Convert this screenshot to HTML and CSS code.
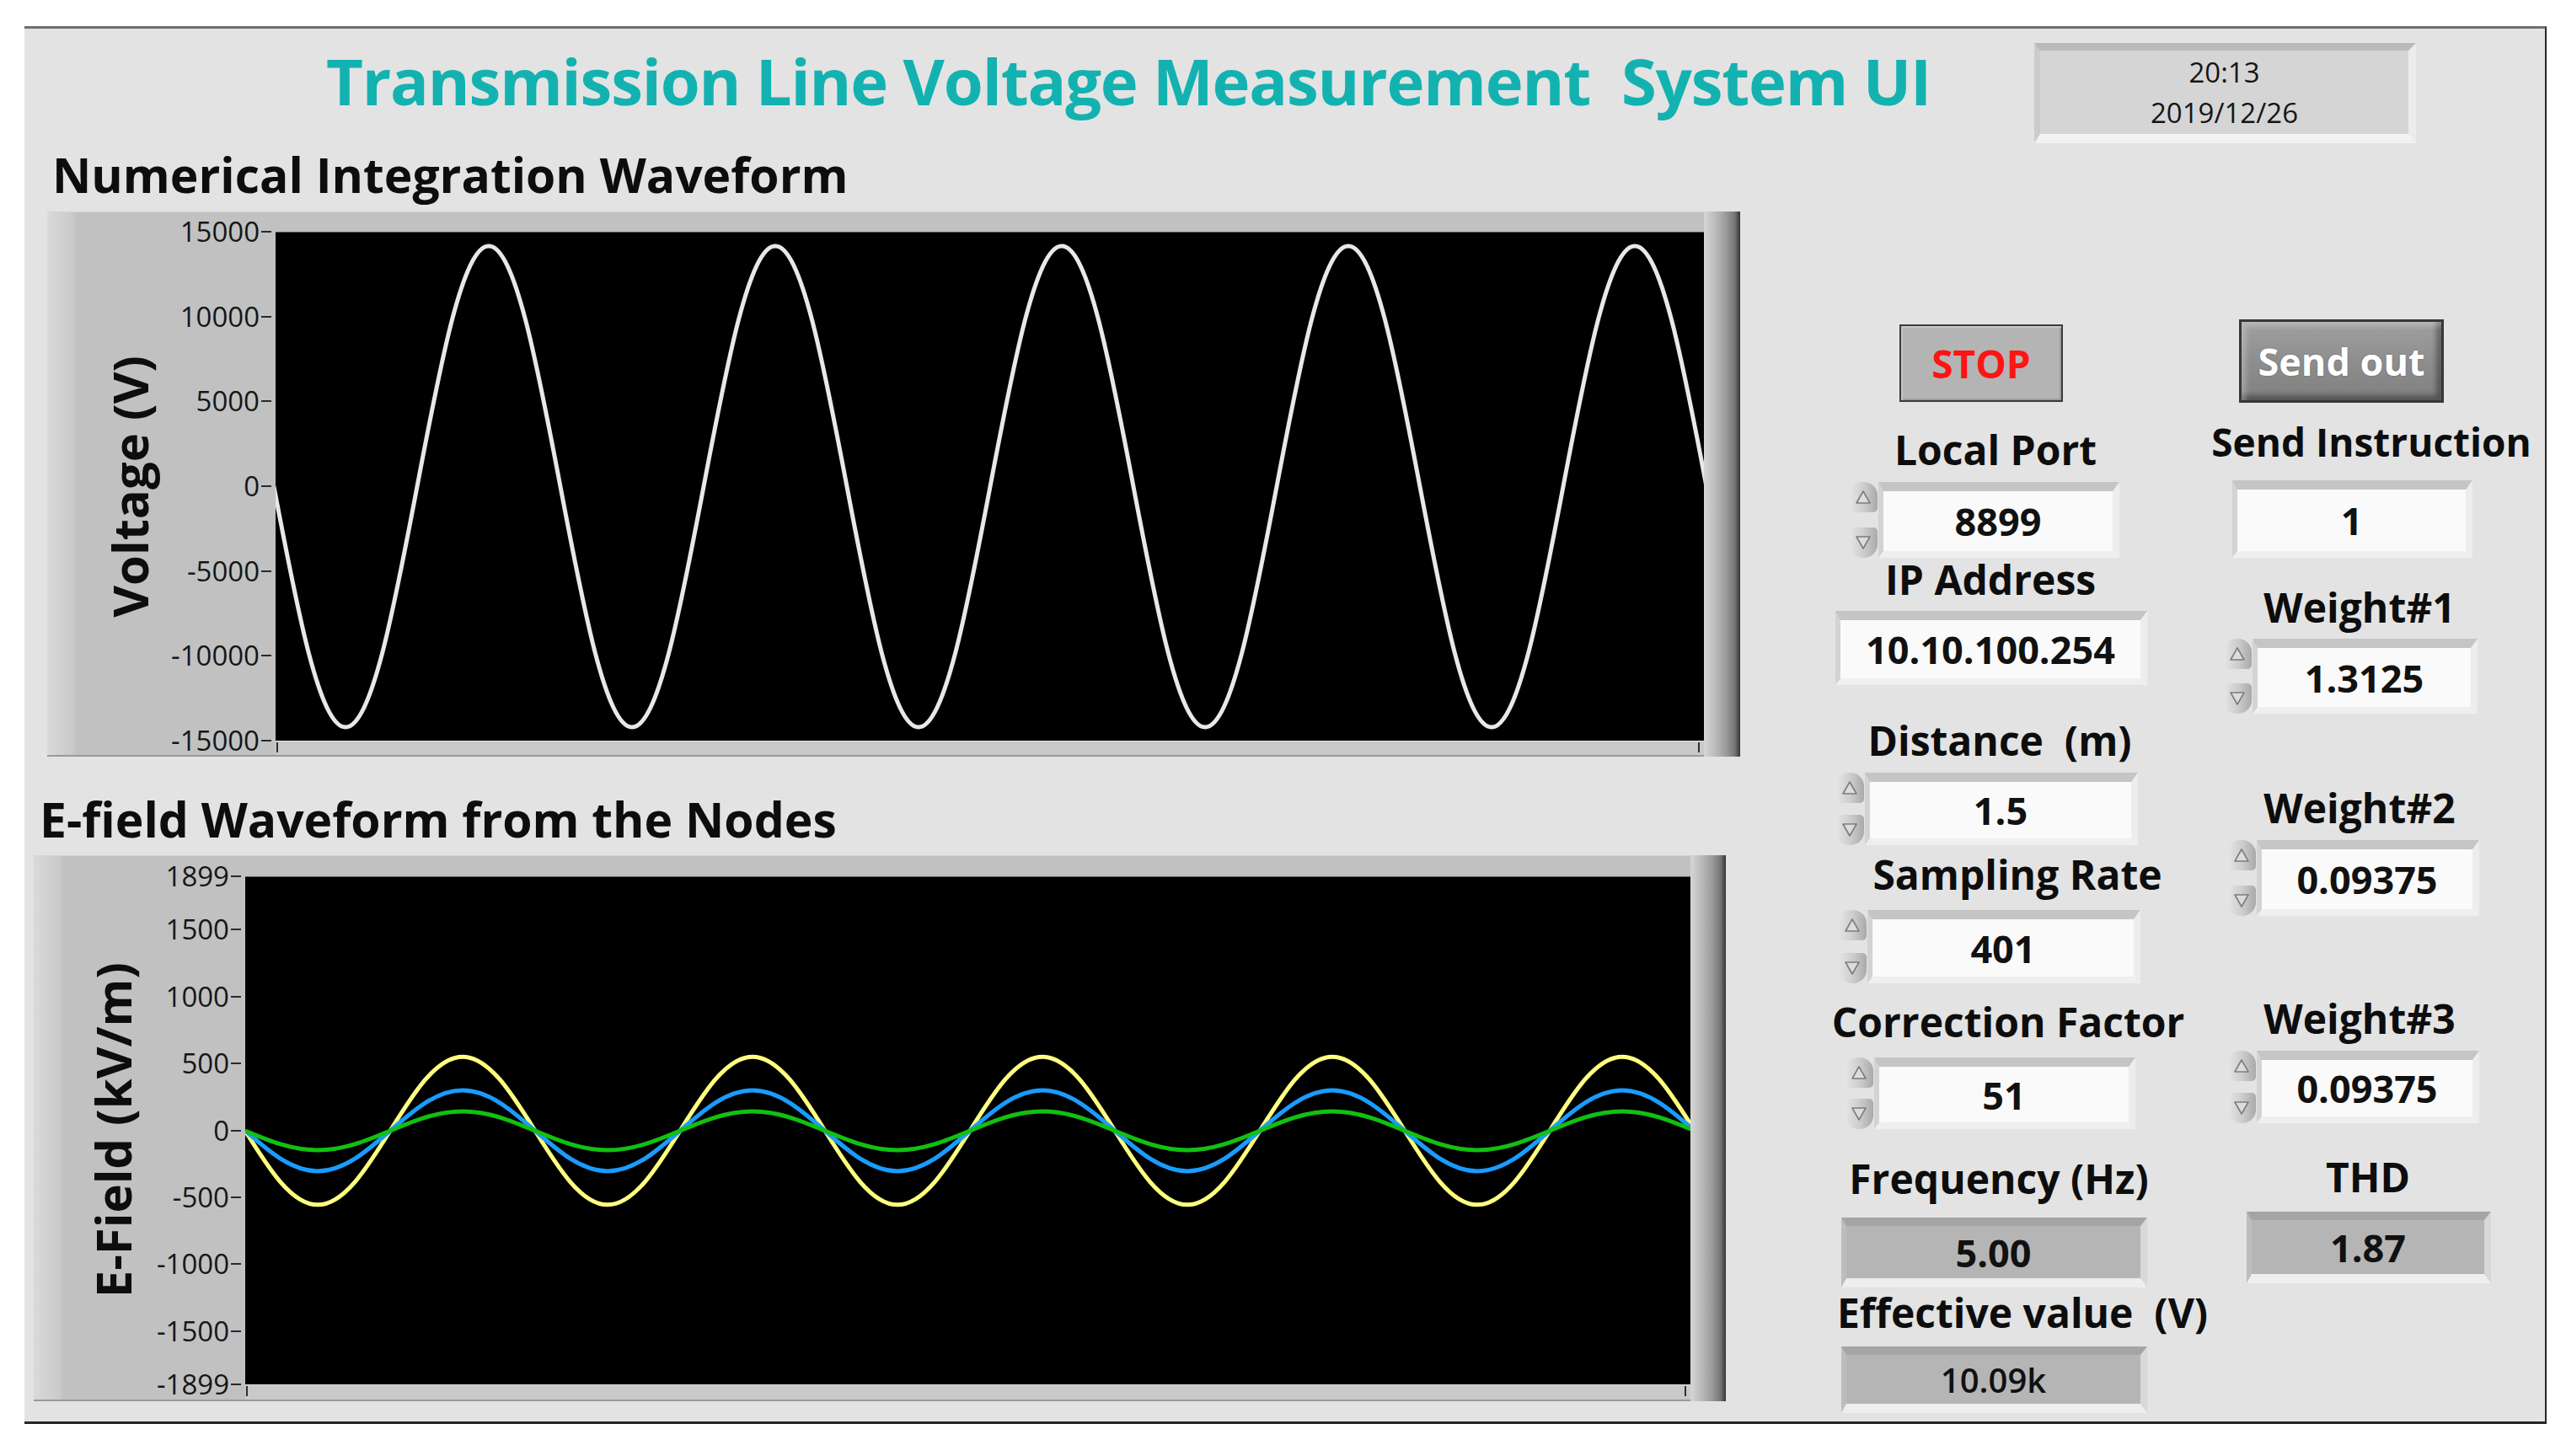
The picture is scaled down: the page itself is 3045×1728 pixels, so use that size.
FILE: index.html
```html
<!DOCTYPE html>
<html lang="en">
<head>
<meta charset="utf-8">
<title>Transmission Line Voltage Measurement System UI</title>
<link rel="stylesheet" href="styles.css">
</head>
<body>
<div class="panel">
  <header class="top">
    <h1 class="title">Transmission Line Voltage Measurement&nbsp; System UI</h1>
    <div class="clock"><div>20:13</div><div>2019/12/26</div></div>
  </header>
  <div class="main">
    <section class="charts">
      <h2 class="chart-title ct-1">Numerical Integration Waveform</h2>
      <div class="frame frame-1">
        <div class="axis">
          <div class="axis-name">Voltage (V)</div>
          <div class="ticks">
            <span class="tick" style="top:0%">15000</span>
            <span class="tick" style="top:16.667%">10000</span>
            <span class="tick" style="top:33.333%">5000</span>
            <span class="tick" style="top:50%">0</span>
            <span class="tick" style="top:66.667%">-5000</span>
            <span class="tick" style="top:83.333%">-10000</span>
            <span class="tick" style="top:100%">-15000</span>
          </div>
        </div>
        <div class="plot">
          <svg viewBox="0 0 1695 604" preserveAspectRatio="none">
            <path class="wave w-white" transform="translate(-2 302) scale(0.85 2.86)" d="M0,0 c32.61,51.23 63.81,100 100,100 s67.39,-48.77 100,-100 s63.81,-100 100,-100 s67.39,48.77 100,100 s63.81,100 100,100 s67.39,-48.77 100,-100 s63.81,-100 100,-100 s67.39,48.77 100,100 s63.81,100 100,100 s67.39,-48.77 100,-100 s63.81,-100 100,-100 s67.39,48.77 100,100 s63.81,100 100,100 s67.39,-48.77 100,-100 s63.81,-100 100,-100 s67.39,48.77 100,100 s63.81,100 100,100 s67.39,-48.77 100,-100 s63.81,-100 100,-100 s67.39,48.77 100,100 s63.81,100 100,100 s67.39,-48.77 100,-100 s63.81,-100 100,-100 s67.39,48.77 100,100"/>
          </svg>
        </div>
        <div class="xaxis"></div>
        <div class="edge"></div>
      </div>

      <h2 class="chart-title ct-2">E-field Waveform from the Nodes</h2>
      <div class="frame frame-2">
        <div class="axis">
          <div class="axis-name">E-Field (kV/m)</div>
          <div class="ticks">
            <span class="tick" style="top:0%">1899</span>
            <span class="tick" style="top:10.51%">1500</span>
            <span class="tick" style="top:23.67%">1000</span>
            <span class="tick" style="top:36.84%">500</span>
            <span class="tick" style="top:50%">0</span>
            <span class="tick" style="top:63.16%">-500</span>
            <span class="tick" style="top:76.33%">-1000</span>
            <span class="tick" style="top:89.49%">-1500</span>
            <span class="tick" style="top:100%">-1899</span>
          </div>
        </div>
        <div class="plot">
          <svg viewBox="0 0 1715 603" preserveAspectRatio="none">
            <path class="wave w-yellow" transform="translate(0 301.5) scale(0.86 0.88)" d="M0,0 c32.61,51.23 63.81,100 100,100 s67.39,-48.77 100,-100 s63.81,-100 100,-100 s67.39,48.77 100,100 s63.81,100 100,100 s67.39,-48.77 100,-100 s63.81,-100 100,-100 s67.39,48.77 100,100 s63.81,100 100,100 s67.39,-48.77 100,-100 s63.81,-100 100,-100 s67.39,48.77 100,100 s63.81,100 100,100 s67.39,-48.77 100,-100 s63.81,-100 100,-100 s67.39,48.77 100,100 s63.81,100 100,100 s67.39,-48.77 100,-100 s63.81,-100 100,-100 s67.39,48.77 100,100"/>
            <path class="wave w-blue" transform="translate(0 301.5) scale(0.86 0.48)" d="M0,0 c32.61,51.23 63.81,100 100,100 s67.39,-48.77 100,-100 s63.81,-100 100,-100 s67.39,48.77 100,100 s63.81,100 100,100 s67.39,-48.77 100,-100 s63.81,-100 100,-100 s67.39,48.77 100,100 s63.81,100 100,100 s67.39,-48.77 100,-100 s63.81,-100 100,-100 s67.39,48.77 100,100 s63.81,100 100,100 s67.39,-48.77 100,-100 s63.81,-100 100,-100 s67.39,48.77 100,100 s63.81,100 100,100 s67.39,-48.77 100,-100 s63.81,-100 100,-100 s67.39,48.77 100,100"/>
            <path class="wave w-green" transform="translate(0 301.5) scale(0.86 0.23)" d="M0,0 c32.61,51.23 63.81,100 100,100 s67.39,-48.77 100,-100 s63.81,-100 100,-100 s67.39,48.77 100,100 s63.81,100 100,100 s67.39,-48.77 100,-100 s63.81,-100 100,-100 s67.39,48.77 100,100 s63.81,100 100,100 s67.39,-48.77 100,-100 s63.81,-100 100,-100 s67.39,48.77 100,100 s63.81,100 100,100 s67.39,-48.77 100,-100 s63.81,-100 100,-100 s67.39,48.77 100,100 s63.81,100 100,100 s67.39,-48.77 100,-100 s63.81,-100 100,-100 s67.39,48.77 100,100"/>
          </svg>
        </div>
        <div class="xaxis"></div>
        <div class="edge"></div>
      </div>
    </section>

    <section class="col col-a">
      <div class="btn stop">STOP</div>

      <div class="label lbl-port">Local Port</div>
      <div class="num f-port">
        <div class="spin"><span class="spin-up"><svg viewBox="0 0 20 18"><path d="M10 2 L18 16 H2 Z"/></svg></span><span class="spin-dn"><svg viewBox="0 0 20 18"><path d="M2 2 H18 L10 16 Z"/></svg></span></div>
        <div class="field">8899</div>
      </div>

      <div class="label lbl-ip">IP Address</div>
      <div class="field f-ip">10.10.100.254</div>

      <div class="label lbl-dist">Distance&nbsp; (m)</div>
      <div class="num f-dist">
        <div class="spin"><span class="spin-up"><svg viewBox="0 0 20 18"><path d="M10 2 L18 16 H2 Z"/></svg></span><span class="spin-dn"><svg viewBox="0 0 20 18"><path d="M2 2 H18 L10 16 Z"/></svg></span></div>
        <div class="field">1.5</div>
      </div>

      <div class="label lbl-samp">Sampling Rate</div>
      <div class="num f-samp">
        <div class="spin"><span class="spin-up"><svg viewBox="0 0 20 18"><path d="M10 2 L18 16 H2 Z"/></svg></span><span class="spin-dn"><svg viewBox="0 0 20 18"><path d="M2 2 H18 L10 16 Z"/></svg></span></div>
        <div class="field">401</div>
      </div>

      <div class="label lbl-corr">Correction Factor</div>
      <div class="num f-corr">
        <div class="spin"><span class="spin-up"><svg viewBox="0 0 20 18"><path d="M10 2 L18 16 H2 Z"/></svg></span><span class="spin-dn"><svg viewBox="0 0 20 18"><path d="M2 2 H18 L10 16 Z"/></svg></span></div>
        <div class="field">51</div>
      </div>

      <div class="label lbl-freq">Frequency (Hz)</div>
      <div class="ind i-freq">5.00</div>

      <div class="label lbl-eff">Effective value&nbsp; (V)</div>
      <div class="ind i-eff">10.09k</div>
    </section>

    <section class="col col-b">
      <div class="btn send">Send out</div>

      <div class="label lbl-si">Send Instruction</div>
      <div class="field f-si">1</div>

      <div class="label lbl-w1">Weight#1</div>
      <div class="num f-w1">
        <div class="spin"><span class="spin-up"><svg viewBox="0 0 20 18"><path d="M10 2 L18 16 H2 Z"/></svg></span><span class="spin-dn"><svg viewBox="0 0 20 18"><path d="M2 2 H18 L10 16 Z"/></svg></span></div>
        <div class="field">1.3125</div>
      </div>

      <div class="label lbl-w2">Weight#2</div>
      <div class="num f-w2">
        <div class="spin"><span class="spin-up"><svg viewBox="0 0 20 18"><path d="M10 2 L18 16 H2 Z"/></svg></span><span class="spin-dn"><svg viewBox="0 0 20 18"><path d="M2 2 H18 L10 16 Z"/></svg></span></div>
        <div class="field">0.09375</div>
      </div>

      <div class="label lbl-w3">Weight#3</div>
      <div class="num f-w3">
        <div class="spin"><span class="spin-up"><svg viewBox="0 0 20 18"><path d="M10 2 L18 16 H2 Z"/></svg></span><span class="spin-dn"><svg viewBox="0 0 20 18"><path d="M2 2 H18 L10 16 Z"/></svg></span></div>
        <div class="field">0.09375</div>
      </div>

      <div class="label lbl-thd">THD</div>
      <div class="ind i-thd">1.87</div>
    </section>
  </div>
</div>
</body>
</html>
```

FILE: styles.css
```css
* { box-sizing: border-box; }

body {
  margin: 0;
  background: #ffffff;
  font-family: "Open Sans", "Noto Sans", "DejaVu Sans", sans-serif;
  color: #111111;
}

.panel {
  margin: 31px 0 0 29px;
  width: 2993px;
  height: 1659px;
  background: #e3e3e3;
  border-top: 3px solid #6e6e6e;
  border-right: 2px solid #262626;
  border-bottom: 3px solid #262626;
  display: flex;
  flex-direction: column;
}

/* header */
.top {
  display: flex;
  align-items: flex-start;
  height: 140px;
  flex: none;
}

.title {
  margin: 22px 0 0 358px;
  font-size: 76px;
  line-height: 80px;
  font-weight: 700;
  letter-spacing: -1.2px;
  color: #13b2b0;
  white-space: nowrap;
}

.clock {
  flex: none;
  margin: 17px 153px 0 auto;
  width: 453px;
  height: 119px;
  padding-top: 2px;
  background: #d5d5d5;
  border-style: solid;
  border-width: 9px 9px 11px 7px;
  border-color: #bababa #ececec #f2f2f2 #cbcbcb;
  text-align: center;
  font-size: 33px;
  line-height: 48px;
  color: #151515;
}

.main {
  display: flex;
  flex: 1;
}

/* charts */
.charts {
  width: 2091px;
  flex: none;
  display: flex;
  flex-direction: column;
  align-items: flex-start;
}

.chart-title {
  margin: 0;
  font-size: 57px;
  line-height: 60px;
  font-weight: 700;
  color: #0d0d0d;
  white-space: nowrap;
}

.ct-1 { margin: 3px 0 0 33px; }
.ct-2 { margin: 44px 0 0 18px; }

.frame {
  display: grid;
  background: linear-gradient(to right, #dadada 0, #d2d2d2 14px, #cacaca 30px, #c1c1c1 36px, #c1c1c1 100%);
  box-shadow: inset 0 -2px 0 #9a9a9a, inset 0 1px 0 #d4d4d4;
}

.frame-1 {
  margin: 14px 0 0 27px;
  grid-template-columns: 271px 1695px 43px;
  grid-template-rows: 24px 604px 19px;
}

.frame-2 {
  margin: 13px 0 0 11px;
  grid-template-columns: 251px 1715px 42px;
  grid-template-rows: 25px 603px 20px;
}

.axis {
  grid-column: 1;
  grid-row: 2;
  display: flex;
}

.axis-name {
  writing-mode: vertical-rl;
  transform: rotate(180deg);
  align-self: center;
  width: 64px;
  font-size: 58px;
  line-height: 64px;
  font-weight: 700;
  text-align: center;
  white-space: nowrap;
  color: #0d0d0d;
}

.frame-1 .axis-name { margin-left: 66px; }
.frame-2 .axis-name { margin-left: 62px; }

.ticks {
  flex: 1;
  position: relative;
}

.tick {
  position: absolute;
  right: 0;
  transform: translateY(-50%);
  display: flex;
  align-items: center;
  font-size: 33px;
  line-height: 40px;
  color: #161616;
  white-space: nowrap;
}

.tick::after {
  content: "";
  width: 12px;
  height: 2px;
  margin: 0 5px 0 2px;
  background: #2a2a2a;
}

.plot {
  grid-column: 2;
  grid-row: 2;
  background: #000000;
  border-top: 1px solid #5a5a5a;
}

.plot svg {
  display: block;
  width: 100%;
  height: 100%;
}

.wave {
  fill: none;
  stroke-width: 5;
  stroke-linejoin: round;
  vector-effect: non-scaling-stroke;
}

.w-white { stroke: #e8e8e8; }
.w-yellow { stroke: #ffff80; }
.w-blue { stroke: #1a9cff; }
.w-green { stroke: #12c012; }

.xaxis {
  grid-column: 2;
  grid-row: 3;
  position: relative;
  background: #c9c9c9;
  border-top: 1px solid #e0e0e0;
  border-bottom: 2px solid #9a9a9a;
}

.xaxis::before,
.xaxis::after {
  content: "";
  position: absolute;
  top: 1px;
  width: 2px;
  height: 12px;
  background: #2f2f2f;
}

.xaxis::before { left: 1px; }
.xaxis::after { right: 5px; }

.edge {
  grid-column: 3;
  grid-row: 1 / 4;
  background: linear-gradient(to right, #d6d6d6 0, #bcbcbc 30%, #9c9c9c 60%, #767676 85%, #4a4a4a 95%, #333333 100%);
}

/* controls */
.col {
  flex: none;
  display: flex;
  flex-direction: column;
  align-items: flex-start;
}

.col-a { width: 480px; }
.col-b { width: 420px; }

.label {
  width: 460px;
  text-align: center;
  font-size: 48px;
  line-height: 50px;
  font-weight: 700;
  white-space: nowrap;
  color: #0d0d0d;
}

.col-b .label { width: 400px; }

.btn {
  display: flex;
  align-items: center;
  justify-content: center;
  font-weight: 700;
  white-space: nowrap;
}

.stop {
  margin: 211px 0 0 134px;
  width: 194px;
  height: 92px;
  background: #b4b4b4;
  border: 2px solid #3a3a3a;
  box-shadow: inset 2px 2px 0 #c6c6c6, inset -2px -2px 0 #9c9c9c;
  color: #ff1414;
  font-size: 46px;
}

.send {
  margin: 205px 0 0 57px;
  width: 243px;
  height: 99px;
  background: linear-gradient(#a0a0a0, #8e8e8e 50%, #808080);
  border: 3px solid #383838;
  box-shadow: inset 5px 5px 6px rgba(255, 255, 255, 0.25), inset -6px -6px 6px rgba(0, 0, 0, 0.35);
  color: #ffffff;
  font-size: 45px;
  text-shadow: 0 0 2px rgba(0, 0, 0, 0.3);
}

.num {
  display: flex;
}

.spin {
  width: 36px;
  flex: none;
  display: flex;
  flex-direction: column;
  justify-content: space-between;
  padding: 0 1px;
}

.spin-up,
.spin-dn {
  height: 36px;
  display: flex;
  align-items: center;
  justify-content: center;
  background: linear-gradient(to right, #e6e6e6, #cbcbcb 55%, #a9a9a9);
}

.spin-up { border-radius: 16px 16px 5px 5px; }
.spin-dn { border-radius: 5px 5px 16px 16px; }

.spin svg {
  width: 20px;
  height: 18px;
}

.spin path {
  fill: #dcdcdc;
  stroke: #7c7c7c;
  stroke-width: 1.6;
  stroke-linejoin: round;
}

.field {
  display: flex;
  align-items: center;
  justify-content: center;
  background: #fafafa;
  border-style: solid;
  border-width: 11px 8px 8px 6px;
  border-color: #c5c5c5 #ededed #efefef #d3d3d3;
  font-size: 45px;
  font-weight: 700;
  color: #111111;
  white-space: nowrap;
}

.num .field { flex: 1; }

.ind {
  display: flex;
  align-items: center;
  justify-content: center;
  background: #b5b5b5;
  border-style: solid;
  border-width: 10px 8px 11px 6px;
  border-color: #a5a5a5 #d8d8d8 #eeeeee #bdbdbd;
  font-size: 45px;
  font-weight: 700;
  color: #111111;
}

/* column A placement */
.lbl-port { margin: 32px 0 0 18px; }
.f-port { margin: 13px 0 0 73px; width: 322px; height: 90px; }
.lbl-ip { margin: 1px 0 0 12px; }
.f-ip { margin: 12px 0 0 58px; width: 370px; height: 88px; }
.lbl-dist { margin: 41px 0 0 23px; }
.f-dist { margin: 13px 0 0 57px; width: 360px; height: 86px; }
.lbl-samp { margin: 10px 0 0 44px; }
.f-samp { margin: 17px 0 0 60px; width: 360px; height: 87px; }
.lbl-corr { margin: 21px 0 0 33px; }
.f-corr { margin: 17px 0 0 68px; width: 346px; height: 85px; }
.lbl-freq { margin: 34px 0 0 22px; }
.i-freq { margin: 21px 0 0 65px; width: 363px; height: 83px; }
.lbl-eff { margin: 5px 0 0 50px; }
.i-eff { margin: 15px 0 0 65px; width: 363px; height: 79px; font-size: 40px; font-weight: 600; }

/* column B placement */
.lbl-si { margin: 21px 0 0 14px; font-size: 46px; }
.f-si { margin: 21px 0 0 49px; width: 285px; height: 92px; }
.lbl-w1 { margin: 34px 0 0 0; }
.f-w1 { margin: 12px 0 0 37px; width: 303px; height: 89px; }
.lbl-w2 { margin: 87px 0 0 0; }
.f-w2 { margin: 13px 0 0 42px; width: 300px; height: 90px; }
.lbl-w3 { margin: 97px 0 0 0; }
.f-w3 { margin: 13px 0 0 42px; width: 300px; height: 86px; }
.lbl-thd { margin: 39px 0 0 10px; }
.i-thd { margin: 16px 0 0 66px; width: 290px; height: 85px; }
```
